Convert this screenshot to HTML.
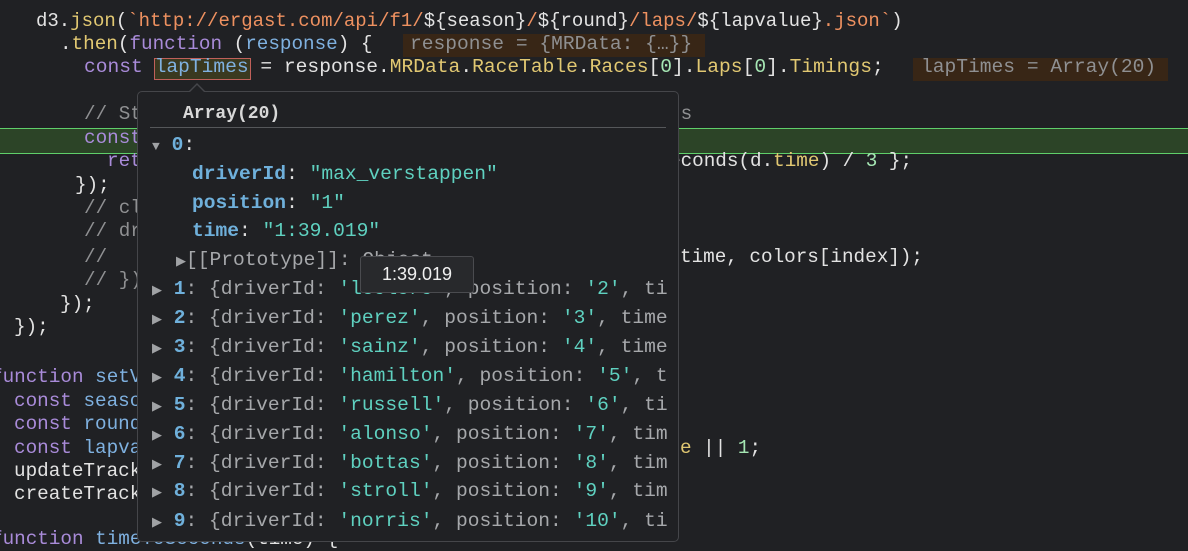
<!DOCTYPE html>
<html><head><meta charset="utf-8"><style>
body{margin:0;width:1188px;height:544px;background:#202124;overflow:hidden;position:relative;font-family:"Liberation Mono",monospace;}
.l{position:absolute;font-size:19.3px;line-height:23.4px;height:23.4px;white-space:pre;color:#e3e3e3;}
.k{color:#a98bd9}.v{color:#7fb1e0}.p{color:#e1c872}.s{color:#ee9160}.n{color:#a5e6b3}.c{color:#8f9092}.g{color:#c0c0c0}
.box{position:absolute;background:#382616;}
#pop{position:absolute;left:137px;top:91px;width:540px;height:449px;background:#202124;border:1px solid #45464a;border-radius:5px;z-index:5;overflow:hidden;}
.r{position:absolute;font-size:19.6px;line-height:26px;white-space:pre;color:#a6a8ab;}
.b{color:#6fb0db;font-weight:bold}.t{color:#5fd1c0}.tri{color:#a0a2a5;font-size:13px}
</style></head><body>
<div style="position:absolute;left:0;top:128px;width:1188px;height:24px;background:#2c4427;border-top:1px solid #5fcf6a;border-bottom:1px solid #5fcf6a"></div>
<div class="box" style="left:403px;top:34px;width:302px;height:23px"></div>
<div class="box" style="left:913px;top:58px;width:255px;height:23px"></div>
<div style="position:absolute;left:154px;top:58px;width:97px;height:22px;background:#3a3920;border:1px solid #c0605a;box-sizing:border-box"></div>

<div class="l" style="left:36px;top:10px;font-size:19px">d3.<span class="p">json</span>(<span class="s">`http://ergast.com/api/f1/</span>${season}<span class="s">/</span>${round}<span class="s">/laps/</span>${lapvalue}<span class="s">.json`</span>)</div>
<div class="l" style="left:60px;top:33px">.<span class="p">then</span>(<span class="k">function</span> (<span class="v">response</span>) {</div>
<div class="l c" style="left:410px;top:33px;font-size:19.6px">response = {MRData: {…}}</div>
<div class="l" style="left:84px;top:56px;font-size:19.6px"><span class="k">const</span> <span class="v">lapTimes</span> = response.<span class="p">MRData</span>.<span class="p">RaceTable</span>.<span class="p">Races</span>[<span class="n">0</span>].<span class="p">Laps</span>[<span class="n">0</span>].<span class="p">Timings</span>;</div>
<div class="l c" style="left:921px;top:56px;font-size:19.6px">lapTimes = Array(20)</div>
<div class="l c" style="left:84px;top:103px">// Store</div>
<div class="l c" style="left:669px;top:103px">rs</div>
<div class="l k" style="left:84px;top:127px">const</div>
<div class="l k" style="left:107px;top:150px">return</div>
<div class="l" style="left:669px;top:150px">econds(d.<span class="p">time</span>) / <span class="n">3</span> };</div>
<div class="l" style="left:75px;top:174px">});</div>
<div class="l c" style="left:84px;top:197px">// clear</div>
<div class="l c" style="left:84px;top:220px">// draw</div>
<div class="l c" style="left:84px;top:246px">//</div>
<div class="l" style="left:680px;top:246px">time, colors[index]);</div>
<div class="l c" style="left:84px;top:269px">// });</div>
<div class="l" style="left:60px;top:293px">});</div>
<div class="l" style="left:14px;top:316px">});</div>
<div class="l" style="left:-9px;top:366px"><span class="k">function</span> <span class="v">setValues</span></div>
<div class="l" style="left:14px;top:390px"><span class="k">const</span> <span class="v">season</span></div>
<div class="l" style="left:14px;top:413px"><span class="k">const</span> <span class="v">round</span></div>
<div class="l" style="left:14px;top:437px"><span class="k">const</span> <span class="v">lapvalue</span></div>
<div class="l" style="left:680px;top:437px"><span class="p">e</span> || <span class="n">1</span>;</div>
<div class="l" style="left:14px;top:460px">updateTrack</div>
<div class="l" style="left:14px;top:483px">createTrack</div>
<div class="l" style="left:-9px;top:528px"><span class="k">function</span> <span class="v">timeToSeconds</span>(time) {</div>

<div style="position:absolute;left:188px;top:83px;width:0;height:0;border-left:9px solid transparent;border-right:9px solid transparent;border-bottom:9px solid #45464a;z-index:6"></div>
<div style="position:absolute;left:189px;top:85px;width:0;height:0;border-left:8px solid transparent;border-right:8px solid transparent;border-bottom:8px solid #202124;z-index:7"></div>
<div id="pop">
<div style="position:absolute;left:0;top:0;width:530px;height:440px;overflow:hidden">
<div class="r" style="left:45px;top:9px;color:#d8d8d8;font-weight:bold;font-size:18px">Array(20)</div>
<div style="position:absolute;left:12px;top:35px;width:516px;height:1px;background:#55575a"></div>
<div class="r" style="left:14px;top:40px"><span class="tri">▼</span> <span class="b">0</span><span style="color:#ddd">:</span></div>
<div class="r" style="left:54px;top:69px"><span class="b">driverId</span><span style="color:#ddd">:</span> <span class="t">"max_verstappen"</span></div>
<div class="r" style="left:54px;top:98px"><span class="b">position</span><span style="color:#ddd">:</span> <span class="t">"1"</span></div>
<div class="r" style="left:54px;top:126px"><span class="b">time</span><span style="color:#ddd">:</span> <span class="t">"1:39.019"</span></div>
<div class="r" style="left:38px;top:155px"><span class="tri">▶</span>[[Prototype]]: Object</div>
<div class="r" style="left:14px;top:184px"><span class="tri">▶</span> <span class="b">1</span>: {driverId: <span class="t">'leclerc'</span>, position: <span class="t">'2'</span>, time</div>
<div class="r" style="left:14px;top:213px"><span class="tri">▶</span> <span class="b">2</span>: {driverId: <span class="t">'perez'</span>, position: <span class="t">'3'</span>, time</div>
<div class="r" style="left:14px;top:242px"><span class="tri">▶</span> <span class="b">3</span>: {driverId: <span class="t">'sainz'</span>, position: <span class="t">'4'</span>, time</div>
<div class="r" style="left:14px;top:271px"><span class="tri">▶</span> <span class="b">4</span>: {driverId: <span class="t">'hamilton'</span>, position: <span class="t">'5'</span>, time</div>
<div class="r" style="left:14px;top:300px"><span class="tri">▶</span> <span class="b">5</span>: {driverId: <span class="t">'russell'</span>, position: <span class="t">'6'</span>, time</div>
<div class="r" style="left:14px;top:329px"><span class="tri">▶</span> <span class="b">6</span>: {driverId: <span class="t">'alonso'</span>, position: <span class="t">'7'</span>, time</div>
<div class="r" style="left:14px;top:358px"><span class="tri">▶</span> <span class="b">7</span>: {driverId: <span class="t">'bottas'</span>, position: <span class="t">'8'</span>, time</div>
<div class="r" style="left:14px;top:386px"><span class="tri">▶</span> <span class="b">8</span>: {driverId: <span class="t">'stroll'</span>, position: <span class="t">'9'</span>, time</div>
<div class="r" style="left:14px;top:416px"><span class="tri">▶</span> <span class="b">9</span>: {driverId: <span class="t">'norris'</span>, position: <span class="t">'10'</span>, time</div>
</div></div>
<div style="position:absolute;left:360px;top:256px;width:114px;height:37px;box-sizing:border-box;background:#28292c;border:1px solid #4a4b4f;border-radius:3px;z-index:9;color:#f0f0f0;font-family:'Liberation Sans',sans-serif;font-size:18px;line-height:35px;text-align:center">1:39.019</div>
</body></html>
